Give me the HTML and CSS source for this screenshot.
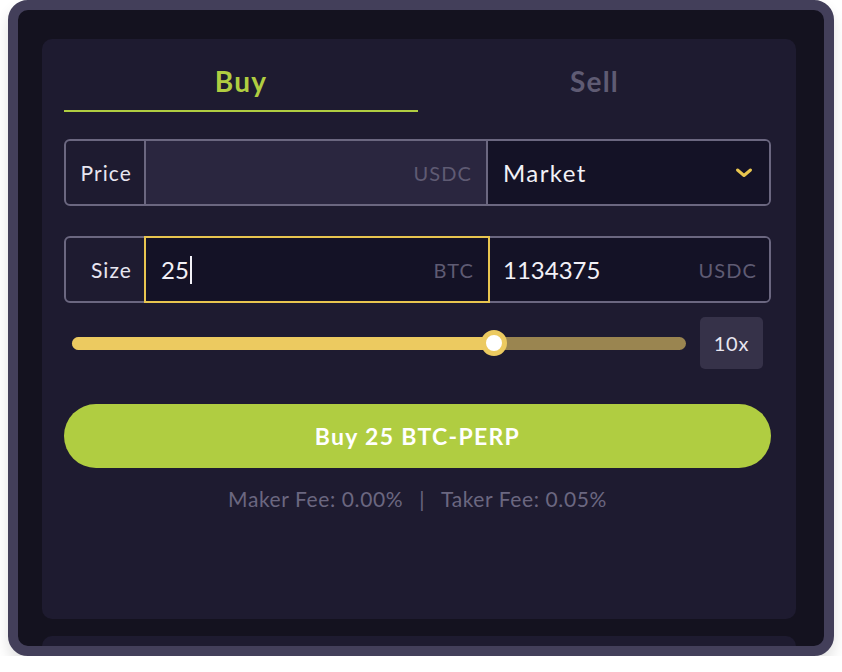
FILE: index.html
```html
<!DOCTYPE html>
<html>
<head>
<meta charset="utf-8">
<link rel="stylesheet" href="styles.css">
</head>
<body>
<div class="frame">
  <div class="card">
    <div class="tabs">
      <div class="tab active">Buy</div>
      <div class="tab">Sell</div>
    </div>
    <div class="row price-row">
      <div class="label">Price</div>
      <div class="field mid disabled"><span class="unit">USDC</span></div>
      <div class="field end select"><span class="value word">Market</span>
        <svg class="chev" width="18" height="12" viewBox="0 0 18 12"><path d="M2.5 3 L9 8.5 L15.5 3" fill="none" stroke="#e8c54f" stroke-width="3" stroke-linecap="round" stroke-linejoin="round"/></svg>
      </div>
    </div>
    <div class="row size-row">
      <div class="label">Size</div>
      <div class="field mid focus"><span class="value">25<span class="caret"></span></span><span class="unit">BTC</span></div>
      <div class="field end"><span class="value">1134375</span><span class="unit">USDC</span></div>
    </div>
    <div class="lev-row">
      <div class="slider">
        <div class="fill" style="width:68.7%"></div>
        <div class="thumb" style="left:68.7%"></div>
      </div>
      <div class="lev">10x</div>
    </div>
    <button class="buy">Buy 25 BTC-PERP</button>
    <div class="fees"><span>Maker Fee: 0.00%</span><span class="sep">|</span><span>Taker Fee: 0.05%</span></div>
  </div>
  <div class="card2"></div>
</div>
</body>
</html>
```

FILE: styles.css
```css
* { box-sizing: border-box; }
body {
  margin: 0;
  background: #ffffff;
  font-family: Lato, "Noto Sans", sans-serif;
}
.frame {
  margin-left: 8px;
  width: 826px;
  height: 656px;
  border: 10px solid #433f5a;
  border-radius: 20px;
  background: #14121f;
  box-shadow: 0 8px 14px rgba(0,0,0,0.12);
  overflow: hidden;
  padding: 29px 28px 0 24px;
}
.card {
  height: 580px;
  background: #1e1b30;
  border-radius: 10px;
  padding: 0 25px 0 22px;
}
.card2 {
  margin-top: 17px;
  height: 40px;
  background: #1e1b30;
  border-radius: 10px;
}
.tabs {
  display: flex;
}
.tab {
  flex: 1;
  text-align: center;
  font-size: 28px;
  font-weight: 700;
  line-height: 32px;
  padding: 26px 0 13px;
  color: #5f5b73;
  letter-spacing: 1.2px;
  border-bottom: 2px solid transparent;
}
.tab.active {
  color: #b0cd41;
  border-bottom-color: #b0cd41;
}
.tab:first-child { width: 354px; flex: none; }
.row {
  display: flex;
  height: 67px;
  border: 2px solid #6b6780;
  border-radius: 6px;
}
.price-row { margin-top: 27px; }
.size-row { margin-top: 30px; }
.label {
  width: 80px;
  display: flex;
  align-items: center;
  justify-content: flex-end;
  padding-right: 12px;
  font-size: 21px;
  color: #e8e6f0;
  letter-spacing: 1.1px;
  border-right: 2px solid #6b6780;
}
.field {
  display: flex;
  align-items: center;
  justify-content: space-between;
  background: #141226;
  padding: 0 14px 0 15px;
}
.field.mid { width: 342px; }
.field.end { flex: 1; border-radius: 0 4px 4px 0; padding-right: 12px; }
.field.disabled {
  background: #2a263f;
  justify-content: flex-end;
  border-right: 2px solid #6b6780;
}
.field.focus {
  outline: 2px solid #e8c54f;
  position: relative;
  z-index: 1;
}
.field.select { padding-right: 16px; }
.value {
  font-size: 24px;
  color: #f2f1f7;
  display: flex;
  align-items: center;
}
.value.word { letter-spacing: 1.4px; }
.unit {
  font-size: 20px;
  color: #5f5b73;
  letter-spacing: 1.1px;
}
.caret {
  display: inline-block;
  width: 2px;
  height: 28px;
  background: #f2f1f7;
  margin-left: 1px;
}
.lev-row {
  display: flex;
  align-items: center;
  margin-top: 14px;
  height: 52px;
  padding-left: 8px;
}
.slider {
  position: relative;
  width: 614px;
  height: 13px;
  border-radius: 7px;
  background: #9a8550;
}
.fill {
  height: 100%;
  border-radius: 7px 0 0 7px;
  background: #ecca60;
}
.thumb {
  position: absolute;
  top: 50%;
  width: 26px;
  height: 26px;
  margin: -13px 0 0 -13px;
  border-radius: 50%;
  background: #ffffff;
  border: 5px solid #ecca60;
}
.lev {
  margin-left: 14px;
  width: 63px;
  height: 52px;
  border-radius: 5px;
  background: #363249;
  color: #e8e6f0;
  font-size: 20px;
  display: flex;
  align-items: center;
  justify-content: center;
  letter-spacing: 0.8px;
}
.buy {
  display: block;
  width: 100%;
  margin-top: 35px;
  height: 64px;
  border: none;
  border-radius: 32px;
  background: #b0cd41;
  color: #ffffff;
  font-family: Lato, "Noto Sans", sans-serif;
  font-size: 23px;
  font-weight: 700;
  letter-spacing: 1.3px;
}
.fees {
  margin-top: 18px;
  display: flex;
  justify-content: center;
  font-size: 21px;
  color: #6b6780;
  letter-spacing: 0.6px;
}
.sep { margin: 0 16px; }
```
